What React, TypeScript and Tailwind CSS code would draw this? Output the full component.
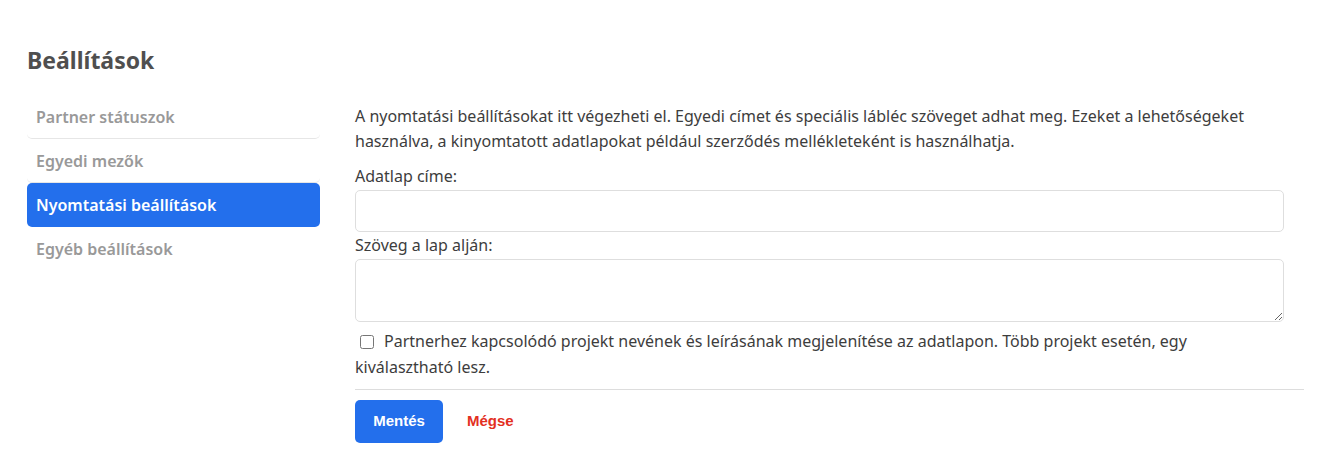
import React from 'react';

export default function App() {
  const menu = [
    { label: 'Partner státuszok', active: false, last: false },
    { label: 'Egyedi mezők', active: false, last: false },
    { label: 'Nyomtatási beállítások', active: true, last: false },
    { label: 'Egyéb beállítások', active: false, last: true },
  ];

  return (
    <div className="min-h-screen bg-white font-['Noto_Sans',sans-serif] text-[#3d3d3d]">
      <div className="pl-[27px] pr-[27px] pt-[42px]">
        {/* Title */}
        <h1 className="text-[23px] font-bold leading-[36px] text-[#4f4f4f]">Beállítások</h1>

        <div className="mt-[17px] flex gap-[35px]">
          {/* Side menu */}
          <div className="w-[293px] shrink-0">
            {menu.map((item) =>
              item.active ? (
                <div key={item.label} className="flex h-[44px] items-center rounded-[5px] bg-[#236fec] px-[9px] text-[16px] font-semibold text-white">
                  {item.label}
                </div>
              ) : (
                <div
                  key={item.label}
                  className={
                    item.last
                      ? 'flex h-[44px] items-center px-[9px] text-[16px] font-semibold text-[#999999]'
                      : 'flex h-[44px] items-center rounded-[5px] border-b border-[#e6e6e6] px-[9px] text-[16px] font-semibold text-[#999999]'
                  }
                >
                  {item.label}
                </div>
              )
            )}
          </div>

          {/* Form */}
          <div className="w-[949px] pt-[9px] text-[16px]">
            <p className="leading-[25px]">
              A nyomtatási beállításokat itt végezheti el. Egyedi címet és speciális lábléc szöveget adhat meg. Ezeket a lehetőségeket
              <br />
              használva, a kinyomtatott adatlapokat például szerződés mellékleteként is használhatja.
            </p>

            <div className="mt-[10px] w-[929px]">
              <label className="block leading-[25px]">Adatlap címe:</label>
              <input type="text" className="mt-[1px] h-[42px] w-full rounded-[5px] border border-[#dedede] px-3 outline-none" />

              <label className="mt-[1px] block leading-[25px]">Szöveg a lap alján:</label>
              <textarea className="mt-[1px] block h-[63px] w-full rounded-[5px] border border-[#dedede] px-3 outline-none" />
            </div>

            <div className="mt-[6px] leading-[26px]">
              <input type="checkbox" className="relative top-[-1px] ml-[5px] mr-[10px] h-[14px] w-[14px] align-middle" />
              Partnerhez kapcsolódó projekt nevének és leírásának megjelenítése az adatlapon. Több projekt esetén, egy
              <br />
              kiválasztható lesz.
            </div>

            <hr className="mt-[9px] border-t border-[#dddddd]" />

            <div className="mt-[10px] flex items-center gap-[24px]">
              <button className="h-[43px] w-[88px] rounded-[5px] bg-[#236fec] font-['Liberation_Sans',sans-serif] text-[15px] font-bold text-white">
                Mentés
              </button>
              <button className="font-['Liberation_Sans',sans-serif] text-[15px] font-bold text-[#e3301f]">Mégse</button>
            </div>
          </div>
        </div>
      </div>
    </div>
  );
}
